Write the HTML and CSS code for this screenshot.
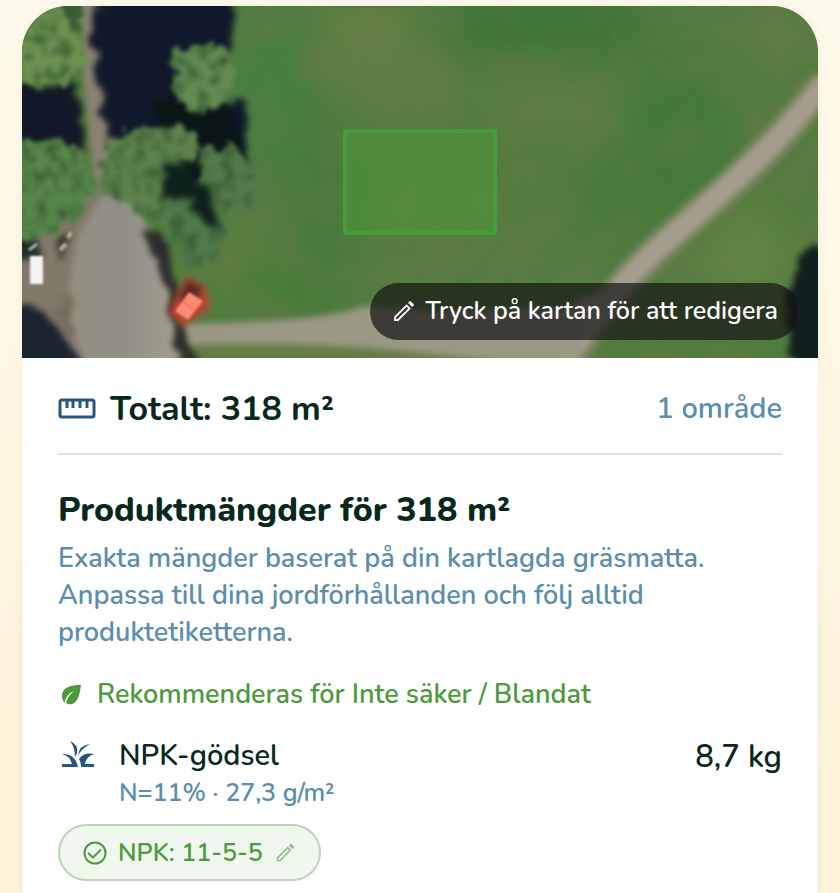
FILE: index.html
```html
<!DOCTYPE html>
<html lang="sv">
<head>
    <meta charset="UTF-8">
    <meta name="viewport" content="width=device-width, initial-scale=1">
    <title>Produktmängder</title>
    <link rel="stylesheet" href="styles.css">
</head>
<body>
    <main class="card">
        <div class="map">
            <svg class="map-image" viewBox="0 0 796 352" preserveAspectRatio="xMidYMid slice" color-interpolation-filters="sRGB" aria-hidden="true">
                <defs>
                    <filter id="soft" x="-50%" y="-50%" width="200%" height="200%"><feGaussianBlur stdDeviation="20"/></filter>
                    <filter id="edge" x="-10%" y="-10%" width="120%" height="120%"><feGaussianBlur stdDeviation="3"/></filter>
                    <filter id="crisp" x="-20%" y="-20%" width="140%" height="140%"><feGaussianBlur stdDeviation="1"/></filter>
                    <filter id="rough" x="-10%" y="-10%" width="120%" height="120%">
                        <feTurbulence type="fractalNoise" baseFrequency="0.05" numOctaves="2" seed="4"/>
                        <feDisplacementMap in="SourceGraphic" scale="24" xChannelSelector="R" yChannelSelector="G"/>
                        <feGaussianBlur stdDeviation="3"/>
                    </filter>
                    <!-- leaf texture, clipped to the shape it is used on -->
                    <filter id="leaves" x="-10%" y="-10%" width="120%" height="120%">
                        <feTurbulence type="fractalNoise" baseFrequency="0.08" numOctaves="3" seed="9" result="noise"/>
                        <feDisplacementMap in="SourceGraphic" in2="noise" scale="24" xChannelSelector="R" yChannelSelector="G" result="shape"/>
                        <feColorMatrix in="noise" type="matrix" values="0 0 0 0 0.2  0 0 0 0 0.34  0 0 0 0 0.18  2.2 0 0 0 -0.95" result="dark"/>
                        <feComposite in="dark" in2="shape" operator="in" result="spots"/>
                        <feMerge><feMergeNode in="shape"/><feMergeNode in="spots"/></feMerge>
                        <feGaussianBlur stdDeviation="2"/>
                    </filter>
                    <filter id="grass" x="0" y="0" width="100%" height="100%">
                        <feTurbulence type="fractalNoise" baseFrequency="0.025" numOctaves="4" seed="2"/>
                        <feColorMatrix type="matrix" values="0 0 0 0 0.46  0 0 0 0 0.48  0 0 0 0 0.3  1.6 0 0 0 -0.62"/>
                        <feGaussianBlur stdDeviation="2"/>
                    </filter>
                    <linearGradient id="road" x1="0" y1="0" x2="1" y2="0">
                        <stop offset="0" stop-color="#968f7f"/>
                        <stop offset="0.5" stop-color="#918f88"/>
                        <stop offset="1" stop-color="#a59f8f"/>
                    </linearGradient>
                </defs>

                <rect width="796" height="352" fill="#527c3f"/>
                <g filter="url(#soft)">
                    <ellipse cx="250" cy="90" rx="40" ry="80" fill="#458041"/>
                    <ellipse cx="300" cy="200" rx="34" ry="110" fill="#467a3e"/>
                    <ellipse cx="520" cy="20" rx="110" ry="34" fill="#3c7637"/>
                    <ellipse cx="655" cy="130" rx="50" ry="80" fill="#407a3a"/>
                    <ellipse cx="610" cy="190" rx="60" ry="40" fill="#457a3a"/>
                    <ellipse cx="370" cy="75" rx="70" ry="34" fill="#607d47"/>
                    <ellipse cx="345" cy="20" rx="50" ry="20" fill="#6b8148"/>
                    <ellipse cx="530" cy="100" rx="70" ry="26" fill="#607d46"/>
                    <ellipse cx="440" cy="235" rx="110" ry="30" fill="#587b41"/>
                    <ellipse cx="760" cy="30" rx="30" ry="30" fill="#647d48"/>
                    <ellipse cx="725" cy="250" rx="45" ry="44" fill="#628544"/>
                    <ellipse cx="220" cy="250" rx="40" ry="60" fill="#5c7d42"/>
                    <ellipse cx="260" cy="280" rx="50" ry="24" fill="#417c36"/>
                </g>
                <rect width="796" height="352" filter="url(#grass)" opacity="0.4"/>

                <g filter="url(#edge)">
                    <!-- footpaths -->
                    <path d="M804 76 C752 142 714 176 680 204 C640 240 596 274 545 356" fill="none" stroke="#718258" stroke-width="34"/>
                    <path d="M804 76 C752 142 714 172 680 204 C640 238 596 272 540 360" fill="none" stroke="#a59d8c" stroke-width="22"/>
                    <path d="M600 286 L574 310 L530 356 L490 356 L530 316 L560 290 Z" fill="#a59d8c"/>
                    <path d="M160 318 C240 316 300 314 345 300 L420 306 L560 300 L560 356 L480 356 C380 344 290 338 160 340 Z" fill="#9b9886"/>
                    <path d="M164 339 C290 335 390 343 460 356 L164 360 Z" fill="#667c47"/>
                    <path d="M58 -8 L96 -8 L94 70 L104 170 L72 180 L62 80 Z" fill="#8a8272"/>
                    <!-- parking area -->
                    <path d="M-8 200 L80 180 L140 360 L30 360 L-8 300 Z" fill="#82796a"/>
                    <path d="M78 192 Q105 176 118 202 L146 270 L160 362 L62 362 L44 300 L56 230 Z" fill="url(#road)"/>
                </g>

                <g filter="url(#rough)">
                    <path d="M80 -20 L205 -20 L210 45 L186 100 L226 94 L230 158 L210 176 L190 140 L90 136 L70 60 Z" fill="#10192b"/>
                    <path d="M-20 74 L58 78 L62 144 L-20 144 Z" fill="#131828"/>
                    <path d="M124 222 L142 232 L176 372 L158 372 L144 282 Z" fill="#2d2c2b"/>
                    <path d="M-20 296 L24 302 L44 334 L70 372 L-20 372 Z" fill="#1b242f"/>
                    <path d="M-20 228 L20 232 L14 254 L-20 256 Z" fill="#232b2b"/>
                    <path d="M168 50 L210 100 L226 150 L166 184 L130 110 Z" fill="#0a1516"/>
                    <path d="M36 232 L48 222 L42 254 L34 258 Z" fill="#3d382f"/>
                    <path d="M820 232 L782 250 L764 300 L772 372 L820 372 Z" fill="#10201e"/>
                    <path d="M38 286 L46 292 L54 332 L42 320 Z" fill="#746b5b"/>
                </g>

                <g filter="url(#leaves)">
                    <path d="M-20 -20 L50 -20 L60 18 L62 58 L44 80 L-20 80 Z" fill="#6c9150"/>
                    <path d="M-20 138 L30 130 L60 148 L74 184 L54 212 L30 228 L-20 236 Z" fill="#56874a"/>
                    <path d="M150 46 L192 36 L216 60 L206 94 L178 106 L154 92 Z" fill="#628c52"/>
                    <path d="M86 136 L120 118 L168 122 L180 146 L158 164 L158 204 L130 218 L92 192 L74 176 Z" fill="#5e824c"/>
                    <path d="M182 142 L214 138 L240 168 L232 202 L204 212 L176 184 Z" fill="#55794a"/>
                    <path d="M140 198 L184 190 L206 222 L196 252 L168 262 L142 232 Z" fill="#4f7a4a"/>
                    <path d="M36 -14 L54 -14 L58 20 L46 30 Z" fill="#3c5c36"/>
                </g>

                <g filter="url(#rough)">
                    <path d="M140 156 L170 156 L192 200 L200 228 L186 218 L168 194 L140 190 Z" fill="#0e211d"/>
                </g>

                <!-- parked vehicles -->
                <g filter="url(#edge)">
                    <path d="M156 284 L166 270 L184 282 L188 302 L162 320 L146 308 Z" fill="#b8442f"/>
                    <path d="M156 294 L166 274 L180 282 L174 296 Z" fill="#5a2a20"/>
                </g>
                <g filter="url(#crisp)">
                    <path d="M167 286 L181 295 L166 314 L153 305 Z" fill="#ff8a72"/>
                    <path d="M160 296 L174 304" stroke="#f26d57" stroke-width="2"/>
                    <rect x="8" y="250" width="13" height="28" fill="#f4f2f2"/>
                    <path d="M7 244 L15 238" stroke="#a8b6bd" stroke-width="3"/>
                    <path d="M38 244 L44 238 M46 232 L49 226" stroke="#b5ada2" stroke-width="4"/>
                </g>

                <!-- selected area -->
                <rect x="323" y="125" width="150" height="102" rx="1" fill="#4ba234" fill-opacity="0.4" stroke="#459d37" stroke-width="4"/>
            </svg>
            <div class="map-hint">
                <svg class="icon-pencil" viewBox="0 0 24 24" aria-hidden="true">
                    <path d="M3 21 V17 L15 5 L19 9 L7 21 Z M4.700 19.300 H6.300 L16.600 9 L15 7.400 L4.700 17.700 Z" fill-rule="evenodd"/>
                    <path d="M16.300 3.700 L17.700 2.300 Q18.400 1.700 19.100 2.300 L21.700 4.900 Q22.300 5.600 21.700 6.300 L20.300 7.700 Z"/>
                </svg>
                <span>Tryck på kartan för att redigera</span>
            </div>
        </div>

        <div class="content">
            <div class="total">
                <svg class="icon-ruler" viewBox="0 0 38 22" aria-hidden="true">
                    <rect x="2" y="2" width="34" height="17" rx="2"/>
                    <path d="M9 3 V10 M15 3 V10 M22 3 V10 M29 3 V10"/>
                </svg>
                <span class="total-value">Totalt: 318 m²</span>
                <span class="total-areas">1 område</span>
            </div>

            <h2 class="title">Produktmängder för 318 m²</h2>
            <p class="description">Exakta mängder baserat på din kartlagda gräsmatta. Anpassa till dina jordförhållanden och följ alltid produktetiketterna.</p>

            <div class="recommended">
                <svg class="icon-leaf" viewBox="0 0 22 22" aria-hidden="true">
                    <path d="M20 1 C11 1 1 3 1 12 C1 15 2 17 3.500 18.500 C5 13 8 9 13 7 C9 10 6 14 5 19 C8 21 13 21 16 16 C19 11 19 6 20 1 Z"/>
                </svg>
                <span>Rekommenderas för Inte säker / Blandat</span>
            </div>

            <div class="product">
                <svg class="icon-grass" viewBox="0 0 34 28" aria-hidden="true">
                    <path d="M9 1 Q18 5 16 13 L14 17 Q14 7 9 1 Z"/>
                    <path d="M29 4 Q18 5 17 16 Q20 9 29 4 Z"/>
                    <path d="M1 14 Q14 13 17 27 H1 V24 H11 Q9 16 1 14 Z"/>
                    <path d="M33 14 Q23 12 18 19 Q20 22 20 27 H33 V24 H24 Q25 17 33 14 Z"/>
                </svg>
                <div class="product-info">
                    <span class="product-name">NPK-gödsel</span>
                    <span class="product-dose">N=11% · 27,3 g/m²</span>
                </div>
                <span class="product-amount">8,7 kg</span>
            </div>

            <button class="chip" type="button">
                <svg class="icon-check" viewBox="0 0 24 24" aria-hidden="true">
                    <circle cx="12" cy="12" r="10.500"/>
                    <path d="M5 12 L10 16.500 L18 8.500"/>
                </svg>
                <span>NPK: 11-5-5</span>
                <svg class="icon-pencil icon-edit" viewBox="0 0 24 24" aria-hidden="true">
                    <path d="M3 21 V17 L15 5 L19 9 L7 21 Z M4.700 19.300 H6.300 L16.600 9 L15 7.400 L4.700 17.700 Z" fill-rule="evenodd"/>
                    <path d="M16.300 3.700 L17.700 2.300 Q18.400 1.700 19.100 2.300 L21.700 4.900 Q22.300 5.600 21.700 6.300 L20.300 7.700 Z"/>
                </svg>
            </button>
        </div>
    </main>
</body>
</html>
```

FILE: styles.css
```css
* {
    box-sizing: border-box;
}

body {
    font-family: Nunito, 'Noto Sans', sans-serif;
    font-weight: 600;
    background: linear-gradient(#fffbec, #fff3d9) no-repeat #fff3d9;
    color: #08281c;
    margin: 0;
    padding: 6px 22px 0;
    min-height: 100vh;
    display: flex;
}

.card {
    background-color: #fff;
    border-radius: 46px 46px 0 0;
    box-shadow: 0 0 12px rgba(40, 60, 60, 0.06);
    overflow: hidden;
    flex: 1;
}

.map {
    position: relative;
    height: 352px;
}

.map-image {
    display: block;
    width: 100%;
    height: 100%;
}

.map-hint {
    position: absolute;
    right: 19px;
    bottom: 18px;
    display: flex;
    align-items: center;
    gap: 10px;
    height: 57px;
    padding: 0 21px;
    border-radius: 29px;
    background-color: rgba(20, 22, 20, 0.7);
    color: #fff;
    font-size: 25px;
    line-height: 34px;
}

.map-hint span {
    padding-bottom: 2px;
}

.icon-pencil {
    width: 25px;
    height: 25px;
    fill: currentColor;
}

.content {
    padding: 31px 36px 12px;
}

.total {
    display: flex;
    align-items: center;
    gap: 14px;
    padding-bottom: 24px;
    border-bottom: 2px solid #d6e8e2;
}

.icon-ruler {
    width: 38px;
    height: 22px;
    fill: none;
    stroke: #275582;
    stroke-width: 3;
}

.total-value {
    font-size: 34px;
    font-weight: 700;
    line-height: 40px;
}

.total-areas {
    margin-left: auto;
    font-size: 29px;
    line-height: 40px;
    color: #5b8dae;
}

.title {
    margin: 35px 0 10px;
    font-size: 34px;
    font-weight: 800;
    line-height: 40px;
}

.description {
    margin: 0;
    font-size: 27px;
    line-height: 37px;
    color: #5b8dae;
}

.recommended {
    display: flex;
    align-items: center;
    gap: 14px;
    margin-top: 25px;
    padding-left: 3px;
    font-size: 27px;
    line-height: 38px;
    color: #4c9a3c;
}

.icon-leaf {
    width: 22px;
    height: 22px;
    fill: currentColor;
}

.product {
    display: flex;
    align-items: flex-start;
    gap: 24px;
    margin-top: 22px;
    padding-left: 3px;
}

.icon-grass {
    width: 34px;
    height: 28px;
    margin-top: 4px;
    fill: #275582;
}

.product-info {
    display: flex;
    flex-direction: column;
    flex: 1;
}

.product-name {
    font-size: 29px;
    line-height: 40px;
}

.product-dose {
    font-size: 25px;
    line-height: 34px;
    color: #5b8dae;
}

.product-amount {
    font-size: 31px;
    line-height: 42px;
}

.chip {
    display: flex;
    align-items: center;
    gap: 11px;
    height: 57px;
    margin-top: 14px;
    padding: 0 23px;
    border: 2px solid #b7d8b2;
    border-radius: 29px;
    background-color: #eff7ee;
    color: #4c9a3c;
    font-family: inherit;
    font-size: 25px;
    font-weight: 600;
    cursor: pointer;
}

.icon-check {
    width: 24px;
    height: 24px;
    fill: none;
    stroke: currentColor;
    stroke-width: 2;
}

.icon-edit {
    width: 22px;
    height: 22px;
    opacity: 0.6;
}
```
